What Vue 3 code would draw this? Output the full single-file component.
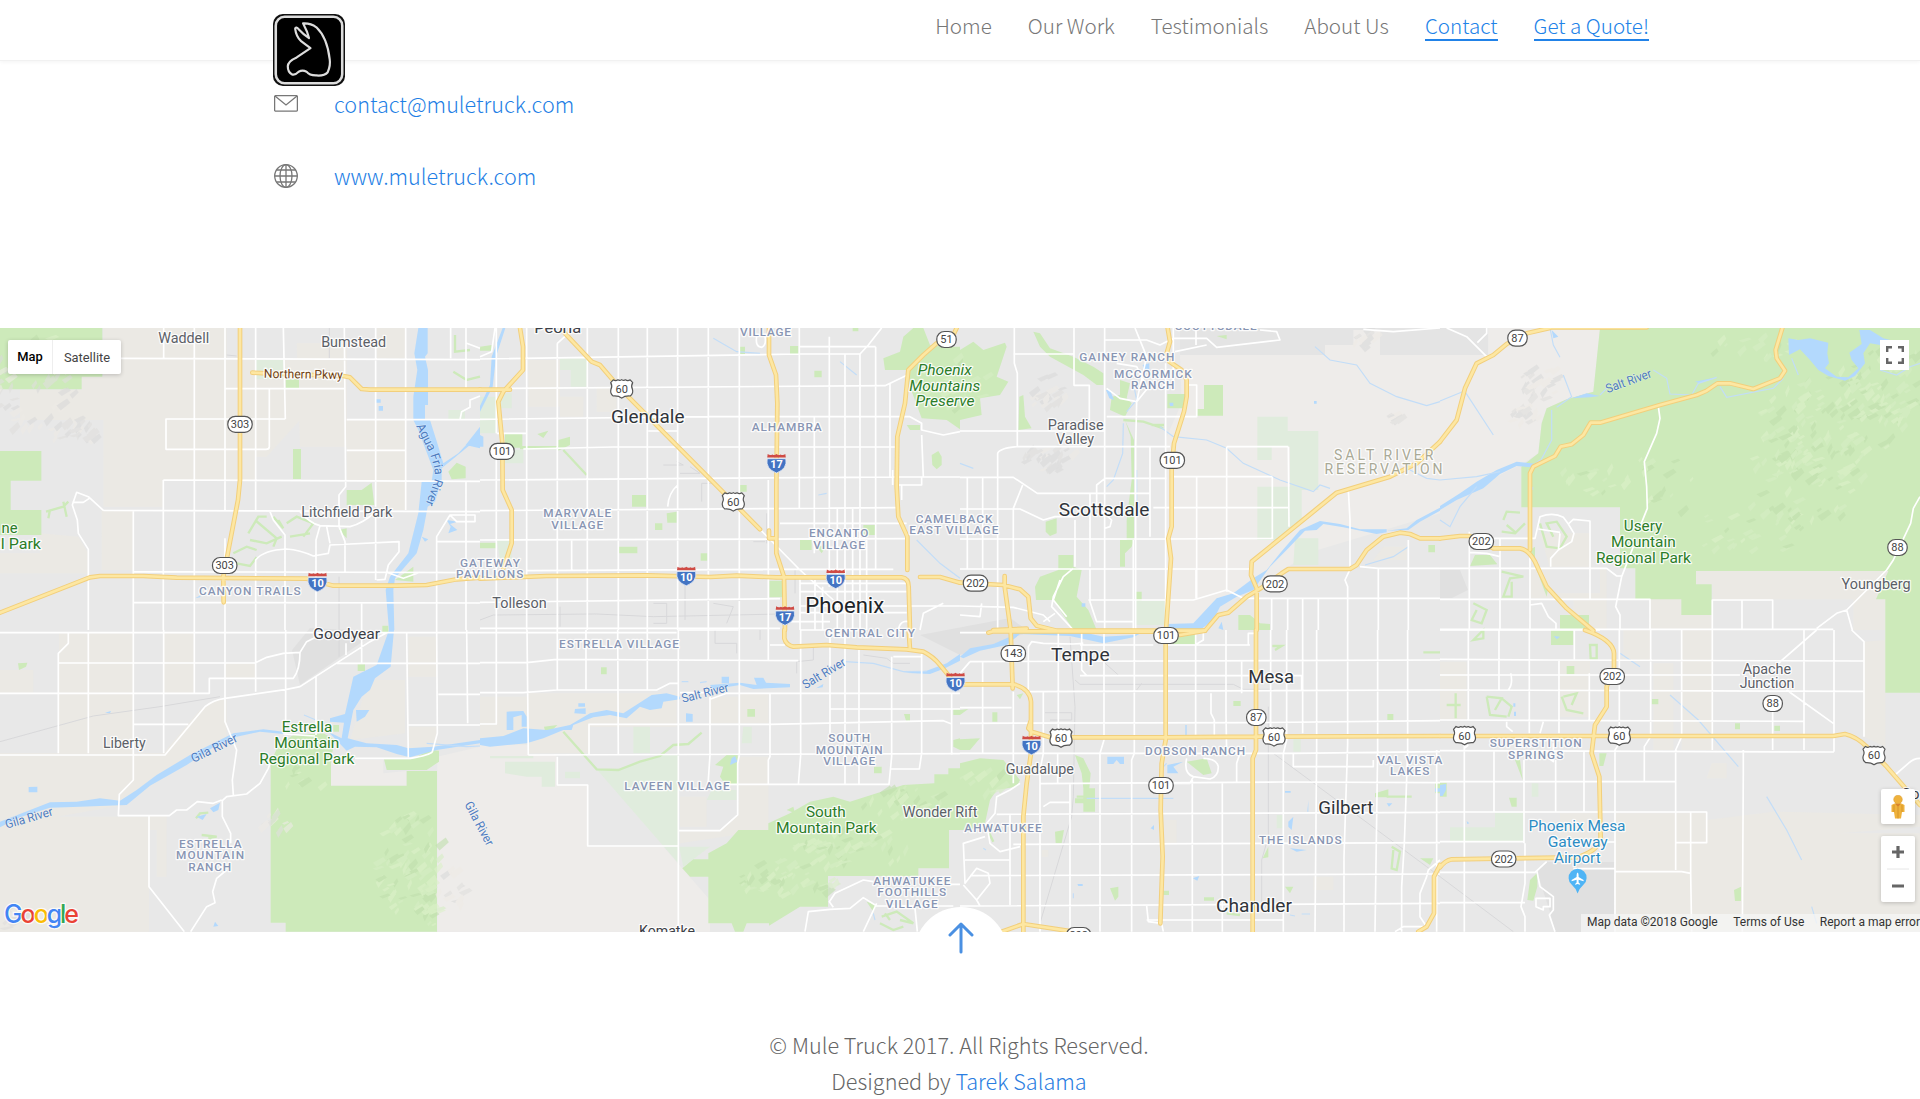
<script setup>
const nav = [
  { label: 'Home' },
  { label: 'Our Work' },
  { label: 'Testimonials' },
  { label: 'About Us' },
  { label: 'Contact', active: true },
  { label: 'Get a Quote!', active: true },
]

// Map geometry, split into eight sectors. Each sector is drawn at three units per pixel.
const sectors = [
  {
    x: 0, y: 320,
    farm: 'M310 24H680V120H900V300L800 410H765V480H490V560H310V300H60V210H245V170H310Z M890 70H1040V300H1220V570H1130V480H1040V380H900Z M305 570H400V750H305Z M1130 24H1215V115H1130Z M120 640L235 650 265 700V760H0V700H120Z',
    reserve: '',
    pale: 'M765 120H850V178H765Z M1345 270H1395V300H1345Z',
    park: 'M0 24H307V170H245V208H0Z M0 393H124V482H32V570H124V645H0Z M879 387H903V477H879Z M857 178H897V204H857Z M1345 455L1370 428 1397 440V475L1355 478Z M1040 510H1085L1115 488 1123 555H1040Z M1185 780L1240 740V785Z M1017 630L1040 625V655Z M1147 917H1165V930H1147Z',
    golf: 'M745 640L775 590H800 M765 600L830 655 820 680 M750 660L800 670 845 650 M820 590L850 625 835 600 M860 610L890 590 940 610 910 650 M870 650L930 640 M700 700L740 680 770 690 M710 730L750 738 770 712 M138 575L190 560 205 545 M145 595L150 570 M190 545L200 590 M1365 45V95L1410 90 M1360 155L1400 180 1440 170',
    water: 'M1255 24H1283V100L1275 110 1284 150V255H1275V300H1290L1312 370 1330 430 1375 400 1440 330V350L1325 445V480L1305 545 1283 560 1270 630 1250 700 1185 775 1180 810 1183 930H1167L1157 810 1170 770 1225 700 1255 580 1265 485H1295L1300 450 1255 330 1240 300V230L1252 150 1243 100Z M1397 375L1440 320V385Z M1128 238H1142V248H1128Z M1136 258H1149V272H1136Z M1340 600L1372 605 1350 612 1372 630 1345 640 1352 620Z M1265 650L1285 658 1275 665Z M585 835L603 825 600 832Z',
    brook: '',
    rail: 'M1017 770V930 M988 24V115 M680 105L710 108',
    streets: 'M491 24V115 M583 24V930 M675 24V570 M675 655V930 M767 24V570 M850 24L856 297 M808 208V380Q808 388 798 388H498V297H856 M1033 24L1037 500 1017 525V620 M1127 24V560 M1127 590V780 M1217 24V570 M1352 24V115 M1398 24V205 M362 115L1440 119 M675 206H1033 M1040 299H1440 M1040 391H1217 M490 480L1440 484 M310 571L1440 575 M490 480V930 M400 571V930 M400 755L1440 758 M400 847L1440 849 M265 930V688L235 640 232 600 217 555 230 517 265 530 310 571 M217 547H250L268 535 M810 575L820 600 855 645V930 M900 575Q930 610 960 617L1050 620Q1090 610 1127 575 M960 617L948 660V930 M767 930V720Q790 690 860 687 900 690 940 708L985 700 990 675 1197 665V695L1165 735 1155 778 1130 780 M980 620L990 670 M1017 620L1035 665V755 M1310 930V650L1350 585H1425V605H1370L1350 585 M1310 665H1440 M1398 484V930 M1160 757L1210 775 1260 757 M1085 850V930 M1380 299L1385 275 1410 262V240L1440 228 M1400 70L1440 85',
    highways: 'M720 24V480L714 540 670 770 671 847 M757 158L800 160 1030 168 1050 172 1085 207 1110 209H1440 M0 878L270 772 300 768H430L530 773 920 776 1000 797H1190L1280 795 1370 778 1440 773',
  },
  {
    x: 480, y: 320,
    farm: 'M145 120H240V260H145Z M240 230H310V290H240Z M350 200H410V275H350Z',
    reserve: '',
    pale: 'M240 115H325V150H240Z M60 220H95V265H60Z M90 390H130V430H75V400Z M0 230H50V340H0Z M272 150H320V200H272Z M50 660H95V720L60 715Z',
    park: 'M1210 115L1260 95 1270 50 1300 24H1330L1350 75 1390 80H1440V328L1400 300 1325 295 1290 200 1280 150 1215 150Z M75 342H127V383H75Z M456 525H498V560H456Z M560 580L590 575V608H562Z M525 610H547V630H525Z M417 680H472V700H417Z M662 700H682V722H662Z M778 495H800V515H778Z M868 782H910V832H868Z M1150 615H1187V645H1150Z M1355 405L1375 393 1385 410V435L1370 448 1357 435Z M960 660H995V690H960Z M172 342L205 332 190 354Z M235 360L270 350V375L235 392Z M930 78H955V102H930Z M780 80H795V102H780Z M1003 152H1025V172H1003Z M0 668H48V685H0Z M1118 24H1135V34H1118Z M1280 315H1320V330H1290Z M0 80L35 75V92H0Z M1010 680L1040 675 1025 700Z M120 378H240V388H120Z',
    golf: 'M250 390L320 465',
    water: 'M0 345L10 350V380H0Z M68 24H76L48 110 38 200 0 275V258L30 195 35 110Z',
    brook: 'M700 55L770 95 840 100 M1080 125L1130 165 M1310 660L1380 730 1440 775 M1015 525L1040 520',
    rail: 'M0 900L40 885 350 882 520 890 900 882 M520 850H560V910H520 M615 780V900 M700 850L760 860 740 910 M550 435H610L590 425 M600 460H660L630 440 M665 545V490H710 M860 580V670 M820 665H855 M945 750V820 M240 860V920',
    streets: 'M49 24V340 M49 400V930 M140 24V930 M232 70V930 M322 24V930 M415 24V930 M502 24V930 M593 24V930 M685 24V930 M778 24V930 M865 480V930 M0 117L958 102H1140L1165 75 1205 24 M90 205L1215 197 1282 165 M0 298L685 290H1290L1325 310V330L1390 345 1440 335 M130 387L400 381H1245 M0 480L1240 471H1440 M0 572L1255 563 M0 660L1280 656 M140 752L870 748H1240 M0 847L900 836 M0 925H900 M958 24V565 M958 80H1187 M1003 290V700 M1048 50V800 M1095 102V930 M1140 102V930 M1187 80V750 M1230 190V471 M1072 565V930 M1118 565V930 M1160 660V930 M900 610H1280 M840 628L960 750 1060 840 M960 790H1280 M960 815H1280 M960 858H1440 M960 878H1280 M930 905H1050 M960 770V930 M1005 780V930 M1028 800V930 M505 333H593 M593 495Q565 520 563 560 M275 660V750 M830 50Q825 80 845 82 860 75 855 50 M232 70L265 40 M0 110L35 95 45 24 M1245 495H1325V471 M1325 345L1330 471 M1265 495V540 M1238 450V495 M50 340H140 M1390 850L1330 880 1320 930 M1255 930Q1260 900 1285 905',
    highways: 'M120 24L129 80V150L70 215 55 245 67 370 68 510 95 570V670L70 745 M0 209H90 M250 35L335 125 360 135 420 205 840 628 M867 24V105L888 165 892 250 889 500V700L912 770 915 930 M867 632V655H885 M0 776L200 768 500 766 690 771 770 767 890 772H1265Q1286 775 1286 800L1290 930 M1430 24L1420 45 1370 70 1330 105 1285 150 1275 250 1252 350 1250 500 1255 590 1282 650V750 M1320 771H1380L1440 788',
  },
  {
    x: 960, y: 320,
    farm: 'M1270 680H1340V720H1240Z',
    reserve: 'M660 105H1440V580L1240 640 1040 700 960 760 870 800 780 840 720 915 620 915V350L665 250Z M1095 75H1180V30H1260V105H1095Z',
    pale: 'M892 290H983V380H935V420H892Z M983 333H1075V510H990V380H983Z M892 500H1025V600L950 660H892Z M1005 655H1075V735H1000Z M525 842H620V915H525Z',
    park: 'M0 90L40 65 70 90 135 68 140 80 110 170 145 185 120 225 60 235 65 285 0 300Z M220 35L240 40 270 85 340 110 400 140 430 160V195H410L370 165 270 110 240 80Z M622 222H675V265H622Z M732 195H789V287H712V267H732Z M480 180L510 190 500 235 515 250 495 290 450 270 455 230 480 225Z M495 300L522 360V660L515 680 495 700V740H480V660H500V600L515 480 512 350Z M175 330L178 230 190 225 195 290 215 325Z M295 705H340V740L365 750 350 830 385 870 410 930H340L280 840H228L225 800 240 770 295 750Z M257 605L290 595V640L270 648 257 635Z M835 885H870L900 910 930 912V930H835Z M1405 675H1425V697H1405Z M525 815H545V842H525Z M770 48L800 45V58Z',
    golf: 'M490 300L550 305 610 325 M575 315H612',
    water: 'M620 912L700 910 770 835 820 820 880 775 920 750 960 700 1020 630 1080 603 1140 612 1200 628H1280V637L1250 642 1150 622 1090 612 1070 630 1035 632 985 685 930 740 905 775 880 810 830 830 780 860 760 900 720 930H620Z M1280 632L1340 625 1370 600 1440 563V572L1380 605 1345 630Z M438 210L450 210 462 240 448 235Z M548 135L568 130V150H552Z M628 248H640V258H630Z M1062 243H1070V251H1062Z M775 925L785 905 790 930Z M365 850H376V860H365Z',
    brook: 'M600 320L640 350 740 360 800 385 850 430 960 480 1060 515 1080 495 1110 505 M1065 80L1110 120 1190 135 1230 190 1310 230 1400 257 1440 245 M490 310L488 400 460 480 440 500 M520 190L530 240 500 275 M0 430L40 445 M1350 450L1400 475 1440 480 M530 450V560 M1215 735L1300 710 1345 680',
    rail: '',
    streets: 'M163 24V130L172 160V378 M342 24V196H388V300 M434 24V650 M527 380V930 M617 130V930 M570 380V650 M22 470V745 M68 470V745 M113 930V400Q118 385 170 380H630 M160 565V745 M345 600V740 M390 520V740 M434 620V930 M710 470V835 M800 380V815 M937 470V655 M985 380L987 620 M160 102H340 M435 60H560L600 75 640 55H740L770 82 960 60 950 35 900 30 M645 95L740 75 M0 333H434 M440 290H710V195H685 M800 380H985 M640 470H937 M0 472H160L232 520H570 M0 567H180L250 600 285 590H345 M410 555V495L435 475H620 M410 520V560L455 600 450 620 435 625 M580 563H985 M0 657H620L940 655 M0 747H870 M385 840H700L800 810 850 835H1440 M1165 510L1170 600V745 M1170 748L1155 780 1163 800V930 M1200 740L1255 745H1440 M1255 745V930 M1345 660V930 M1075 838V930 M1028 838V930 M983 838V930 M935 838V930 M188 495L160 565 M340 745L310 770 280 830 275 860 340 930 M0 858L160 862 250 885 270 905 M390 745V845L410 905H520 M0 885L60 890 65 850 M525 24L560 110 530 245 527 380 M575 190L530 245 M440 205L480 235 530 245 M470 130L530 140 560 200 M520 660V930 M1210 28L1300 35 1440 24 M708 750V835 M640 24V200 M708 24V75 M300 780L280 840 320 890 M250 905L285 880',
    highways: 'M623 24L630 65 620 100 628 125 665 150 680 180V230L672 275 642 370 635 450V620L625 655 633 715 618 930 M1440 365L1370 430 1290 470 1130 518 1060 575 875 725 873 765 890 805V930 M0 788L130 795 180 808 205 830 212 895 230 917 290 932H735L775 885 805 878 860 830 905 803 965 760 985 747H1170L1190 735 1220 690 1270 650 1320 638 1350 642 1380 655H1440 M134 768V800L152 930 M100 930L200 926',
  },
  {
    x: 1440, y: 320,
    farm: 'M768 753H1345L1308 838H818V793H768Z M300 640H450V740H330V820H480V745H500V930H400V835H270V745H330Z M630 838H724V885H815V930H630Z M1240 838H1336V930H1240Z',
    reserve: 'M145 24H480L460 215 380 238 320 265 305 310 295 400 250 430 150 480 0 570V105H145Z',
    pale: '',
    park: 'M480 24H1440V930H1336V838H1308L1345 753H768V793H815V885H724V838H586V745H540V562H244V440L295 400 305 310 320 265 380 238 460 215Z M90 738L105 705H150L172 733Z M360 885H447V930H360Z M268 690L285 680V720L325 800 320 830Z',
    golf: 'M190 600L200 575 240 578 M185 635L225 640 255 610 M200 615L230 640 M300 610L320 680 360 685 380 650 350 605 320 610 340 650 M185 755L250 770 210 775 190 830H215V785 M100 850L140 870 125 910 95 900 110 870',
    water: 'M1045 55L1075 60 1110 55 1165 68 1162 100 1167 130 1155 145 1190 170 1225 172 1255 145 1235 120 1228 98 1265 72 1258 30 1290 30 1330 55 1390 70V80L1320 75 1290 70 1270 100 1275 130 1245 168 1215 182 1165 168 1135 150 1110 120 1080 88 1047 105Z M0 558L60 520 110 485 170 450 230 425 290 432 275 442 230 438 180 462 130 505 50 540 0 570Z M335 30L355 50 340 55Z M395 235L440 220 480 228 450 232Z M765 185L830 172 780 190Z',
    brook: 'M330 24L340 75 360 112 M370 165L395 230 350 262 M335 270V360L300 425 M75 215L160 345 M0 243L75 212 M480 225L500 205 M640 150L680 175 690 222 755 225 775 190 830 172 M840 200L860 232 1000 205 1030 175 M1055 115L1075 165 M0 480L110 470 180 455 M1320 150L1370 165 1410 140 1440 130 M0 600L30 620 60 560 110 500 M275 440L300 420 M278 500V510',
    rail: '',
    streets: 'M20 24L80 50 140 110 M112 68L140 40V24 M655 260L660 295 650 340 613 425 620 500 622 565 600 620 M580 680L545 770 527 860 540 885V930 M1440 530L1420 565 1412 610 1360 720 1340 750 1220 870 1190 880 1130 925 M1220 870L1237 930 M0 745H500L530 768H545 M0 838H630V930 M160 655H285L300 590Q340 575 370 592L385 612 402 640 395 665 355 690 332 715V740 M385 612L400 598 450 603V838 M295 627L360 637 M360 640L355 690 M88 635V930 M180 655V930 M270 700V930 M817 930V840H998V930 M906 840V930 M270 855L305 850 325 890 348 910V930 M90 697L140 700 180 710 M0 928H1180',
    highways: 'M0 365L50 300 75 205 110 130 160 105 200 72 260 40 330 24 M330 22H620 M1027 24L1007 90 1010 115 1035 152 1020 175 940 207 870 190H832L800 212 770 225 660 255 480 308H452L430 345 395 373 362 380 345 408 280 440 270 460V690 M0 655L60 648H90L160 685H240Q265 688 285 725L320 800 380 865 460 932',
  },
  {
    x: 0, y: 630,
    farm: 'M0 370H490L600 240 650 210H680V320L560 395 370 525 0 590Z M0 560H447V905H0Z M177 8H400V370H177Z M490 8H583V190H490Z M675 100H767V145H675Z M1225 20H1310V140H1225Z M1100 150H1215V310L1050 330 1090 200Z M1225 290H1310V360H1225Z M447 557H500V740H470V600H447Z M0 120H100V190H0Z',
    reserve: 'M1312 423H1440V905H1312Z M1312 380L1440 350V423H1312Z M1000 390H1150V430L1220 423V467H993V400Z',
    pale: '',
    park: 'M812 400L835 345 880 315 970 310 1005 330 993 385V467H1220V423H1311V905H857V878H812Z M1152 388H1235L1290 360 1317 362V395L1280 420H1160Z M54 100L82 98 78 110 57 120Z M1073 103H1095V123H1073Z M1147 0H1165V8H1147Z M1000 285H1017V305H1000Z',
    golf: 'M588 565L600 550 625 548 M605 615L650 620 625 625',
    water: 'M0 575L150 517 230 515 300 505 360 512 410 480 470 435 570 375 640 340 700 310 790 298 850 305V312L780 305 710 320 640 352 560 405 450 467 380 525 240 530 150 533 60 562 0 592Z M1167 0H1182L1172 110 1125 145 1110 180 1085 200 1060 240 1043 325 1100 340 1190 345 1225 355 1300 350 1440 330V340L1310 360 1230 382 1190 372 1130 352 1065 350 1040 362 985 305 1025 325 1032 278 990 275V265L1035 252 1060 140 1130 105Z M1068 240H1108L1095 260 1070 275Z M86 471L112 470V487H86Z M630 535L660 518 655 540 640 547Z M590 560L620 552 608 570Z M640 890L645 875 655 888Z M315 248L333 243 330 250Z',
    brook: 'M912 255L960 275 M1280 340L1400 350 1440 348',
    rail: 'M0 335L280 258 480 230 660 200 M1017 0V80',
    streets: 'M0 8H1440 M177 99H765L800 82 850 70 900 67Q900 120 880 145H628V190H0 M205 8V40L175 70V370 M265 8V370 M400 0V450L358 493 355 557H508L530 540H560L592 515 640 520 665 510 M491 0V370 M583 0V190 M675 0V275L710 360 697 450 700 495 M767 0V185 M857 0V310 M948 140V315 M1220 8L1225 382 M1310 0L1312 310 1297 365Q1290 375 1230 385H1065 M1400 0L1403 280 M1225 285H1440 M1010 100H1440 M1315 193H1440 M675 205L860 178 900 170 1110 35 1160 8 M0 375H495L615 230Q640 210 675 205 M400 283H565 M900 67L920 35 950 20 M1085 30V100 M1038 40V75 M812 395L805 415 780 460 740 492 680 500 667 512V560L692 610V640 M680 720L650 745 638 785 645 818 620 830 572 905 M447 557V770L553 905 M850 312L945 318',
    highways: '',
  },
  {
    x: 480, y: 630,
    farm: 'M0 200H145V370H0Z M145 190H590V290H330V370H145Z M780 190H865V280H780Z M780 380H865V600L600 640V602H720L775 555Z M690 200H775V280H690Z M600 500H680V590H600Z',
    reserve: 'M0 340L145 345V375H230V465H325V650H550L690 810V905H0Z',
    pale: 'M350 418L420 420 540 375H595V700Z M75 395H225V470H185V440H140L75 430Z M460 290H510V370H460Z M255 425H300V445H255Z M790 290H815V340H785Z M597 650H690L610 710Z M30 378H160V385H30Z M695 480H770V510H680Z',
    park: 'M607 715L640 688H685V670L740 640 775 600H865V580L930 550 990 515 1060 500 1110 515 1190 490 1270 465 1363 460V433H1405V415H1440V600H1407V715H1315V738H1044V830H960L867 887V880H800L790 905H765L755 880H685V740H630Z M705 405L740 375H773V462H735L720 440 730 410Z M363 112H380V133H363Z M802 237H825V260H802Z M1182 410H1205V430H1182Z M1272 252H1290V272H1278Z M1420 237H1440V255H1420Z M192 290L232 285 215 302H195Z M1160 815L1190 825 1180 845Z M1420 330L1440 325V360L1420 350Z M920 540L940 530 945 550Z',
    golf: 'M250 305L350 418 415 420 480 395 540 378 580 345 625 342 665 308 M1205 860L1250 845 1300 880 1260 870 M1200 880L1240 900 1270 890 M1215 850L1230 870',
    water: 'M0 325L70 318 130 295 200 300 270 285 330 250 380 240 430 250 500 205 515 195 560 190 600 200V208L550 215 545 235 510 240 480 230 440 265 390 255 340 262 280 285 275 300 250 300 190 325 140 340 30 350 0 345Z M80 245L130 243 140 260V290H125V255L100 262V300H80Z M295 220H315V230H295Z M285 237L317 235V252L283 250Z M725 140H747V160H725Z M690 165L780 158 830 165 822 143H850L858 158 930 162V172L820 177 780 165 700 178Z M618 250L638 252V275H618Z M1008 175L1030 162 1028 172Z M750 405L755 385 765 378 772 395Z M1340 122L1400 100 1440 72V92L1395 115 1350 132 1270 128Z',
    brook: 'M1095 95L1180 100 1270 125 1340 124 M605 155H625 M660 158L680 155 M1180 850L1185 870',
    rail: 'M705 0V40H770V70 M950 130V95L1000 90V50 M1150 75L1220 85 1240 100H1290 M840 0V30',
    streets: 'M49 0V282H0 M141 0L145 375 M232 0V180 M318 0V180 M413 0L415 375 M502 0V180 M595 0V905 M685 0V90 M778 0V375L773 400V555L720 602H595 M690 200V375L684 465 M870 190V380L865 390V465 M962 0V375L955 465 M1050 0V310 M1095 0V465 M1137 60V465 M1235 80V380L1227 463H745 M1325 70V370L1318 417H1230 M1415 190V375 M0 8H590 M0 98H140L230 88 955 92 M0 188H130L230 180H530L570 160H595 M690 208L740 190H1440 M1050 237H1440 M325 283H870L1390 272 1415 282 M327 283V375 M145 375L1440 371 M232 380V465H323V648H593 M870 45H915 M865 0V90 M600 188H690 M975 905L985 845 1050 838 1110 835 1150 803 1190 828H1420 M1060 832L1048 815 1065 790 1150 750 1180 755 M1190 820L1150 905 M1305 835L1312 905 M1410 763H1440 M1240 80H1325 M595 0H775 M960 0H1080',
    highways: 'M913 0V25Q918 45 940 50L1040 45 1130 52 1280 58 1330 65Q1360 80 1380 105L1425 160 1440 163 M1286 0L1290 58',
  },
  {
    x: 960, y: 630,
    farm: 'M610 570H650V640H610Z M1060 740H1120V780H1060Z M245 660H265V680H245Z',
    reserve: '',
    pale: 'M1000 325H1022V365H1000Z M950 555H968V595H950Z',
    park: 'M0 400L60 385 130 390 180 450 170 470 110 480 90 510 75 580 30 600H0Z M345 375L370 385 392 430 388 475H405V545H370V520H345V505H370V475L365 430Z M680 395L740 385 755 430 730 435Z M820 213H842V228H820Z M97 247H112V275H97Z M0 328L60 325 30 360H0Z M0 240L25 237 0 255Z M285 605L312 600 305 640H287Z M1282 252H1300V270H1282Z M1245 490L1285 478V502H1245Z M908 685L925 650V682Z M450 775L475 770V800L465 812Z M610 782H627V795H610Z M732 802H762V812H732Z M975 770H1000L990 790Z M1380 685H1420L1410 705Z M650 20L705 12V43H620Z M170 195L190 190 180 208Z M1425 460H1440V490H1425Z',
    golf: 'M1295 650L1320 665 1310 720 1295 715 1300 660 M95 590L88 610 100 635 M937 48H965L945 60 M1390 67H1440 M1280 500H1355 M800 850L840 855 M350 500H405',
    water: 'M0 80L30 55 100 42 150 20 175 0H340L430 20 520 15 560 0 520 22 430 40 330 18 180 12 140 45 60 62 10 85Z M442 380H492V402H480L470 390 460 402H442Z M622 405L670 395 640 410 655 430 622 430Z M985 575L1000 560 995 600 985 590Z M990 655L1040 660 1010 665Z M698 745L718 738 712 752Z M1280 520H1297L1287 530Z M572 595L582 585V600Z M975 483H992V488H975Z M352 762H368V768H355Z M1425 475H1440V485H1425Z M1045 510V545H1042Z M676 285H680V315H676Z',
    brook: 'M380 505H640 M990 855L1005 858 M1025 852H1050 M340 790V805 M70 655L78 660 M620 400L600 420',
    rail: 'M240 880L335 560 340 500 345 230 330 20 M345 150L360 163H820L850 178H940 M925 230V620L905 690V820 M940 370L1400 710 1440 740 M255 248H335V270H270 M430 95L475 135 M530 180L545 160',
    streets: 'M68 95V370 M160 185V460 M250 185V370L240 420V905 M295 0V320 M293 370V460 M330 460V905 M432 0V330L420 370V905 M523 0V370L515 390V905 M697 450V905 M707 0V320 M787 460V905 M798 0V250L800 370 M845 95V190 M932 0V310 M980 0V330L970 370V905 M1028 0V310 M1070 0V350L1065 905 M1163 0V340L1152 680V905 M1253 0V360L1245 905 M1343 0V365L1333 640 1325 770V905 M1430 360V905 M30 95L1440 90 M0 130L30 95 M360 137H880 M890 137H1025V180 M200 185L1440 180 M0 233H155 M0 280L890 278 1440 272 M0 370H1000L1440 365 M240 461L965 456 1440 458 M110 553L1440 547 M160 643L1440 638 M30 737L1440 732 M50 828L1440 820 M560 870H970 M560 828L565 875 605 880 610 905 M365 0V120L380 137 M680 385Q670 430 700 440L750 447Q775 440 775 410 770 385 730 385 M700 440L690 460H640 M180 460L150 480 110 500 105 550 80 580 90 640 120 665 180 650 M150 555V825 M75 620L10 640 15 760 50 715 85 730 90 760 50 810 10 765 M15 690H150 M0 828H60L50 810 M250 530L270 517H328 M1000 370V410H1240V390 M1440 690L1405 720 1400 740 1380 790V860L1400 890 M1305 905L1330 890H1390 M360 45H580 M205 180V50L215 35 250 40 340 42 370 40 M865 45V10H890 M705 45L730 30V0 M753 190V250L763 270V320 M840 370L830 400V460 M610 45H870 M0 8H90',
    highways: 'M85 8L100 4 290 4 580 5 M660 15L735 2 M152 0L158 175 M0 163H160Q210 175 213 215V270L205 295 215 305 270 322H610L890 320 1440 318 M213 270V370L200 460 190 560V905 M617 0V330L605 400 602 540 608 680 601 880 M888 0V360L878 385V905 M125 905L190 882 340 905 M1440 705L1422 740V850L1400 890 1375 905',
  },
  {
    x: 1440, y: 630,
    farm: 'M525 550H800V905H525Z M800 570L1000 545 1440 555V590L1200 610H1440V905H755V640H800Z M725 0H815V360H725Z M640 100H700V360H640Z M1272 35L1336 30V350L1272 320Z M360 90H450V260H360Z M0 95H80V270H0Z M815 400H860V445H800Z M360 550H480V640H360Z M550 0H630V90H550Z',
    reserve: '',
    pale: 'M165 548H250V635H165Z M30 592H165V635H30Z M275 460H295V500H275Z',
    park: 'M1336 0H1440V188H1336Z M333 0H400V45H333Z M380 108H403V133H380Z M635 207H655V223H635Z M885 280H900V298H885Z M1003 287H1020V303H1003Z M478 370H500L490 408H478Z M207 503H230V530H215Z M882 780L903 770V813H885Z M262 810L270 750 292 728V770L280 812Z M225 390H240L248 450Z M0 458H20V500H0Z',
    golf: 'M20 225H62 M47 190V265 M140 200L150 255 200 260 M140 200L185 205 165 240 M185 205L215 230 205 260 M365 200L380 240 430 250 M370 200L410 190 395 225 M100 30L130 0V25Z M450 45H470V85H452Z',
    water: 'M0 465L18 462V480L8 498H0Z M342 18L360 20 350 28Z M220 220H226V230H220Z M222 245H228V258H222Z M80 573L88 580 82 582Z',
    brook: 'M540 70L600 110 M690 195L775 270 895 410 M980 500L1040 600 1085 690 M1115 830L1130 880',
    rail: 'M0 740L220 905',
    streets: 'M85 0V270 M177 0V180 M268 0V310 M403 0V88 M538 0V340L525 360V905 M632 0V320L613 350V455 M725 0V320L707 360V720 M817 0V360 M910 360V420L907 905 M998 200V360 M1092 0V360 M1182 0V365 M73 345V905 M162 365V545 M252 390V640 M347 390V545 M432 365V545 M357 90V310 M448 130V270 M0 88L320 90 1272 93 M0 135H900 M0 180L1272 184 M0 270L1090 274 M0 362L1182 366 M0 455H705 M0 546H800V638H707 M752 547V730L755 905 M0 635H250 M525 725H725L752 730 M0 727H285L320 695 M400 716H525 M0 818H255 M1130 0L1015 100 M1040 180L1180 280 M1235 0L1272 35V320 M1365 435L1405 400Q1420 385 1440 385 M290 720L300 770 340 800V840L328 855 345 905 M255 640V760L243 830 255 860V905 M288 805H330V830H310V840L288 830Z M85 345L73 355 M212 130Q220 160 205 180 M200 275V290L218 305 M310 275L300 310 M340 340V395L320 380 M480 636H525 M0 0H480',
    highways: 'M435 0Q520 30 522 70V120L500 170V230L465 285 455 370 478 440 482 630Q470 665 410 682L35 688Q15 692 0 712 M0 318H1180L1215 312Q1250 320 1280 350L1340 410 1440 525',
  },
]
const layers = [
  'farm', 'reserve', 'pale', 'park', 'golf', 'relief',
  'water', 'brook', 'rail', 'streets', 'casing', 'highways',
]
const at = (s) => `translate(${s.x} ${s.y}) scale(0.33333)`

// Hill shading: facets scattered inside elliptical ranges.
const ranges = [
  [30, 390, 45, 45, 50, 'stone'], [70, 432, 26, 14, 28, 'stone'], [55, 350, 40, 14, 12, 'green'],
  [1825, 430, 75, 55, 110, 'green'], [1880, 385, 50, 40, 60, 'green'], [1800, 480, 60, 50, 60, 'green'],
  [1745, 530, 60, 25, 30, 'green'], [1670, 480, 40, 35, 14, 'green'], [1590, 480, 35, 14, 14, 'green'],
  [1760, 350, 55, 14, 14, 'green'],
  [1537, 385, 20, 18, 26, 'stone'], [1520, 417, 16, 12, 20, 'stone'],
  [1050, 460, 30, 12, 26, 'stone'], [1045, 395, 18, 20, 22, 'stone'], [1360, 340, 13, 10, 12, 'stone'], [1392, 418, 6, 6, 8, 'stone'],
  [405, 865, 34, 50, 70, 'green'], [425, 905, 12, 24, 26, 'green'], [300, 785, 18, 18, 8, 'green'],
  [785, 880, 50, 20, 44, 'green'], [850, 850, 60, 18, 44, 'green'], [900, 805, 40, 18, 26, 'green'], [980, 785, 24, 15, 12, 'green'],
  [950, 385, 35, 30, 22, 'green'], [275, 825, 20, 12, 10, 'stone'], [450, 890, 16, 20, 12, 'stone'], [10, 920, 16, 12, 8, 'stone'],
]
let seed = 11
const rand = () => ((seed = (seed * 16807) % 2147483647) / 2147483647)
const facets = ranges.flatMap(([cx, cy, rx, ry, n, tone]) =>
  Array.from({ length: n }, () => {
    const a = rand() * 6.283, r = Math.sqrt(rand())
    const x = cx + Math.cos(a) * r * rx, y = cy + Math.sin(a) * r * ry
    const w = 3 + rand() * 8, h = 2 + rand() * 6
    const tones = tone === 'green' ? ['#c0dfad', '#dcf1c9', '#d6eec4'] : ['#dadada', '#eeebe6', '#e0dfdd']
    return {
      d: `M${x.toFixed(1)} ${y.toFixed(1)}l${w.toFixed(1)} ${(-h).toFixed(1)} ${(w * 0.3).toFixed(1)} ${(h * 0.6).toFixed(1)} ${(-w * 0.9).toFixed(1)} ${(h * 1.1).toFixed(1)}z`,
      fill: tones[Math.floor(rand() * 3)],
    }
  }),
)

// [text, centre x, baseline y, width, style, rotation]
const labels = [
  ['Waddell', 183.7, 343.3, 51, 'town'], ['Bumstead', 353.7, 347, 65, 'town'],
  ['Northern Pkwy', 303.3, 378.5, 79, 'road', 1], ['Litchfield Park', 346.7, 516.7, 91, 'town'],
  ['ne', 9.5, 533.3, 16, 'green'], ['al Park', 16.5, 549, 49, 'green'],
  ['CANYON TRAILS', 249.8, 594.5, 101.7, 'hood'],
  ['GATEWAY', 490, 566.8, 60, 'hood'], ['PAVILIONS', 489.7, 578.4, 67.3, 'hood'],
  ['Goodyear', 346.7, 638.7, 66.7, 'town dark'], ['Peoria', 557.7, 332.7, 47, 'town dark'],
  ['VILLAGE', 765.5, 335.7, 51, 'hood'], ['Glendale', 647.7, 422.7, 73.5, 'city'],
  ['ALHAMBRA', 786.7, 431.2, 70, 'hood'],
  ['MARYVALE', 577.2, 517.4, 67.7, 'hood'], ['VILLAGE', 577.2, 529, 52, 'hood'],
  ['ENCANTO', 838.7, 537.2, 59.3, 'hood'], ['VILLAGE', 839, 548.8, 51.7, 'hood'],
  ['CAMELBACK', 954, 522.8, 76.7, 'hood'], ['EAST VILLAGE', 953.8, 534.3, 89, 'hood'],
  ['Tolleson', 519.5, 607.7, 54.3, 'town'], ['Phoenix', 844.7, 613.3, 79, 'metro'],
  ['CENTRAL CITY', 870, 636.8, 90, 'hood'],
  ['Phoenix', 944.7, 375, 54, 'green slant'], ['Mountains', 944.7, 390.5, 71, 'green slant'], ['Preserve', 945, 406, 59, 'green slant'],
  ['SCOTTSDALE', 1215.8, 330, 81.7, 'hood'], ['GAINEY RANCH', 1126.8, 361.2, 95, 'hood'],
  ['MCCORMICK', 1152.8, 377.8, 77.7, 'hood'], ['RANCH', 1152.7, 389.4, 43.3, 'hood'],
  ['Paradise', 1075.7, 430, 56, 'town'], ['Valley', 1075, 444.4, 38, 'town'],
  ['Scottsdale', 1104, 516.3, 90.7, 'city'],
  ['SALT RIVER', 1383.7, 460, 99.3, 'tribe'], ['RESERVATION', 1383.5, 474, 118, 'tribe'],
  ['Usery', 1643, 531, 38.3, 'green'], ['Mountain', 1643.3, 547, 64.7, 'green'], ['Regional Park', 1643.5, 562.6, 95, 'green'],
  ['Youngberg', 1876, 589, 69, 'town'], ['Liberty', 124.3, 748.3, 42.7, 'town'],
  ['Estrella', 307, 732, 50.7, 'green'], ['Mountain', 306.8, 748, 65, 'green'], ['Regional Park', 306.8, 763.6, 95, 'green'],
  ['ESTRELLA', 210.3, 847.8, 62.7, 'hood'], ['MOUNTAIN', 210, 859.4, 68, 'hood'], ['RANCH', 209.7, 871, 42.7, 'hood'],
  ['ESTRELLA VILLAGE', 619, 648, 120, 'hood'],
  ['SOUTH', 849.2, 742, 41.7, 'hood'], ['MOUNTAIN', 849.2, 753.6, 67, 'hood'], ['VILLAGE', 849.2, 765.2, 51.7, 'hood'],
  ['LAVEEN VILLAGE', 677, 790.2, 105.3, 'hood'],
  ['South', 825.8, 817, 39.7, 'green'], ['Mountain Park', 826.3, 832.8, 100.7, 'green'],
  ['Wonder Rift', 940, 817.3, 74.7, 'town'],
  ['AHWATUKEE', 911.8, 884.6, 77, 'hood'], ['FOOTHILLS', 911.7, 896.2, 68.7, 'hood'], ['VILLAGE', 911.7, 907.6, 52, 'hood'],
  ['Komatke', 667, 936.3, 56, 'town dark'],
  ['Tempe', 1080.3, 661, 58.7, 'city'], ['Mesa', 1271.2, 682.6, 45.7, 'city'],
  ['DOBSON RANCH', 1195, 755.2, 100, 'hood'], ['Guadalupe', 1039.8, 774.4, 68.3, 'town'],
  ['AHWATUKEE', 1003, 832.2, 77.3, 'hood'], ['Gilbert', 1345.8, 813.7, 55, 'city'],
  ['THE ISLANDS', 1300.3, 844.2, 82.7, 'hood'], ['Chandler', 1254, 911.7, 76, 'city'],
  ['VAL VISTA', 1409.8, 763.6, 65, 'hood'], ['LAKES', 1409.7, 775.2, 39.3, 'hood'],
  ['Apache', 1767, 674, 48.3, 'town'], ['Junction', 1767, 688.2, 54.7, 'town'],
  ['SUPERSTITION', 1535.7, 747.2, 92, 'hood'], ['SPRINGS', 1535.7, 758.8, 55.3, 'hood'],
  ['Phoenix Mesa', 1577, 831, 97, 'airport'], ['Gateway', 1577.7, 847, 60, 'airport'], ['Airport', 1577.3, 862.6, 46.7, 'airport'],
  ['Go', 1910.5, 799, 18, 'town dark'],
  ['Gila River', 216, 752, 50, 'river', -26], ['Gila River', 30, 822, 49, 'river', -16], ['Gila River', 475.5, 825.5, 48, 'river', 62],
  ['Salt River', 706, 697, 48, 'river', -14], ['Salt River', 826, 677, 48, 'river', -31], ['Salt River', 1630, 385, 48, 'river', -20],
]
const spaced = (kind) => kind === 'hood' || kind === 'tribe'
const stateShields = [
  ['303', 240, 424.3], ['303', 224.7, 565.5], ['101', 502, 451.3], ['51', 946.5, 339.5], ['101', 1172.3, 460.3],
  ['202', 975.5, 583.2], ['202', 1275, 583.8], ['87', 1517.5, 338.2], ['202', 1481.3, 541.5], ['88', 1897.5, 547.5],
  ['101', 1166, 635.5], ['143', 1013.3, 653.5], ['87', 1256.3, 717.5], ['101', 1161, 785.5], ['202', 1612.2, 676.5],
  ['88', 1772.7, 703.5], ['202', 1503.7, 859], ['202', 1078.7, 935.5],
]
const usShields = [
  [621.7, 388.6], [733.3, 501.6], [1061, 737.8], [1274, 736.6], [1464.5, 735.3], [1619.3, 735.8], [1874, 755.2],
]
const interstates = [
  ['10', 317.5, 582], ['17', 776.5, 463.2], ['10', 686.3, 576], ['10', 835.7, 578.8], ['17', 785, 615.5], ['10', 955.5, 682], ['10', 1031.5, 745],
]
</script>

<template>
  <div class="page">
    <header class="topbar">
      <div class="wrap">
        <svg class="logo" viewBox="0 0 73 73">
          <rect width="73" height="73" rx="10" fill="#111" />
          <rect x="2.8" y="2.8" width="67.4" height="67.4" rx="9" fill="#000" stroke="#ddd" stroke-width="2.6" />
          <path d="M38 34.5L24 44Q15 48 15 53 15 59 19 61 22 62.5 26 58.500 30 56.500 34 58.500 37 62.500 44 62.300 52 63 55.500 59 58.500 52 57.500 46 55 24 44 13.500 38 9 30.500 9.500L34.500 18 36.500 24.500Q31 21 26.500 16 23 12 22.500 15 23.500 23 28.500 27.500 33 31 38 34.500Z" fill="#000" stroke="#ddd" stroke-width="2.2" stroke-linejoin="round" />
        </svg>
        <nav class="nav">
          <a v-for="n in nav" :key="n.label" :class="{ active: n.active }">{{ n.label }}</a>
        </nav>
      </div>
    </header>

    <main class="contact">
      <div class="row">
        <svg class="icon mail" viewBox="0 0 24 17"><rect x=".6" y=".6" width="22.800" height="15.600" rx="1.200" /><path d="M1 1L12 10 23 1" /></svg>
        <a>contact@muletruck.com</a>
      </div>
      <div class="row">
        <svg class="icon globe" viewBox="0 0 24 24"><circle cx="12" cy="12" r="11.300" /><ellipse cx="12" cy="12" rx="6" ry="11.300" /><path d="M12 .7V23.300M.7 12H23.300M2.500 6H21.500M2.500 18H21.500" /></svg>
        <a>www.muletruck.com</a>
      </div>
    </main>

    <section class="map">
      <svg class="canvas" viewBox="0 328 1920 604">
        <defs>
          <path id="agua" d="M416 426L429 452Q438 474 433 484L425 506" />
        </defs>
        <rect x="0" y="328" width="1920" height="604" fill="#e8e8e8" />
        <path d="M1180 328H1488V355H1180Z" fill="#e4e4e4" />
        <path d="M292 650L310 628 350 630 365 640 300 685ZM1537 872L1547 862H1614V932H1555L1550 912ZM1440 570H1460L1468 590 1452 598H1440ZM920 635L1010 618 1030 632 960 655Z" fill="#e0e0e0" />
        <g v-for="layer in layers" :key="layer" :class="layer">
          <template v-if="layer === 'relief'">
            <path v-for="(f, i) in facets" :key="i" :d="f.d" :fill="f.fill" />
          </template>
          <template v-else>
            <path v-for="(s, i) in sectors" :key="i" :transform="at(s)" :d="s[layer === 'casing' ? 'highways' : layer]" />
          </template>
        </g>

        <text v-for="(l, i) in labels" :key="i" :x="l[1]" :y="l[2]" :textLength="l[3]" :lengthAdjust="spaced(l[4]) ? 'spacing' : 'spacingAndGlyphs'" :class="['label', l[4]]" :transform="l[5] ? `rotate(${l[5]} ${l[1]} ${l[2]})` : null">{{ l[0] }}</text>
        <text class="label river along"><textPath href="#agua">Agua Fria River</textPath></text>

        <g v-for="([n, x, y], i) in stateShields" :key="'s' + i" :transform="`translate(${x} ${y})`">
          <rect :x="n.length > 2 ? -12.2 : -9.7" y="-8" :width="n.length > 2 ? 24.4 : 19.4" height="16" rx="7.600" fill="#fff" stroke="#555" stroke-width="1.200" />
          <text class="num" y="3.900">{{ n }}</text>
        </g>
        <g v-for="([x, y], i) in usShields" :key="'u' + i" :transform="`translate(${x} ${y})`">
          <path d="M-8.500-8.800Q-6-7-3.800-8.800-1.800-7.600 0-9 1.800-7.600 3.800-8.800 6-7 8.500-8.800L11-6Q9-2.500 10.700.5 12 5 8.500 7.400 3 7 0 9.500-3 7-8.500 7.400-12 5-10.700.5-9-2.500-11-6Z" fill="#fff" stroke="#555" stroke-width="1.200" stroke-linejoin="round" />
          <text class="num" y="4.200">60</text>
        </g>
        <g v-for="([n, x, y], i) in interstates" :key="'i' + i" :transform="`translate(${x} ${y})`">
          <path d="M-9.300-4.500H9.300Q11.300 5.500 0 9.800-11.300 5.500-9.300-4.500Z" fill="#4374c3" stroke="#e8eef8" stroke-width=".8" />
          <path d="M-8.800-9.200Q-6.500-7.300-4-8.800-2-7.500 0-9.300 2-7.500 4-8.800 6.500-7.300 8.800-9.200L9.300-5.800H-9.300Z" fill="#cf4b45" />
          <text class="num inter" y="5">{{ n }}</text>
        </g>

        <g transform="translate(1577.600 879)">
          <path d="M0 14.500Q-1.500 9.500-6 5.500A9 9 0 1 1 6 5.500Q1.500 9.500 0 14.500Z" fill="#4fb4f5" />
          <path d="M0-6.500Q1-6 1-3.500V-2L6 1V2.200L1 .8V3.500L2.500 5V5.800L0 5-2.500 5.800V5L-1 3.500V.8L-6 2.200V1L-1-2V-3.500Q-1-6 0-6.500Z" fill="#fff" />
        </g>
        <text class="google" x="4" y="922.500" textLength="75"><tspan fill="#4285f4">G</tspan><tspan fill="#ea4335">o</tspan><tspan fill="#fbbc05">o</tspan><tspan fill="#4285f4">g</tspan><tspan fill="#34a853">l</tspan><tspan fill="#ea4335">e</tspan></text>
      </svg>

      <div class="ctl types"><b>Map</b><span>Satellite</span></div>
      <div class="ctl full">
        <svg viewBox="0 0 18 18"><path d="M1.200 6V1.200H6M12 1.200H16.800V6M16.800 12V16.800H12M6 16.800H1.200V12" fill="none" stroke="#666" stroke-width="2.400" /></svg>
      </div>
      <div class="ctl peg">
        <svg viewBox="0 0 14 24"><path d="M3.500 8.500H10.500L13.500 10V17H11L10 23.500H4L3 17H.500V10Z" fill="#efb23c" /><path d="M7 12V23.500M3 10V17M11 10V17" stroke="#cf8f27" stroke-width=".8" /><path d="M4 8.500H10L7 12Z" fill="#d9822b" /><circle cx="7" cy="4.500" r="4.300" fill="#efb23c" stroke="#d9982c" stroke-width=".5" /></svg>
      </div>
      <div class="ctl zoom">
        <svg viewBox="0 0 34 66"><path d="M11 16H23M17 10V22M11 50H23" stroke="#666" stroke-width="3.200" /><path d="M6 33H28" stroke="#e6e6e6" /></svg>
      </div>
      <div class="credits"><span>Map data ©2018 Google</span><span>Terms of Use</span><span>Report a map error</span></div>
      <a class="to-top">
        <svg viewBox="0 0 26 32"><path d="M13 30V2.500M2 13L13 2 24 13" /></svg>
      </a>
    </section>

    <footer class="foot">
      <p>© Mule Truck 2017. All Rights Reserved.</p>
      <p>Designed by <a>Tarek Salama</a></p>
    </footer>
  </div>
</template>

<style>
body { background: #fff; overflow: hidden; }
</style>

<style scoped>
.page {
  height: 1099px;
  display: flex;
  flex-direction: column;
  background: #fff;
  color: #666;
  font-family: "Noto Sans CJK SC", "Open Sans", sans-serif;
  font-weight: 300;
  overflow: hidden;
}
a { color: #1f7fe5; }
.topbar { height: 60px; flex: none; border-bottom: 1px solid #f1f1f1; box-shadow: 0 1px 4px rgba(0, 0, 0, .05); }
.wrap { width: 1376px; margin: 0 auto; padding-left: 2px; display: flex; justify-content: space-between; align-items: flex-start; }
.logo { width: 72px; height: 72px; margin-top: 13.500px; flex: none; position: relative; }
.nav { display: flex; gap: 36px; margin-top: 11px; }
.nav a { font-size: 20.600px; line-height: 28px; color: #777; border-bottom: 2px solid transparent; white-space: nowrap; }
.nav a.active { color: #2182e8; border-color: #2182e8; }
.contact { flex: none; width: 1374px; height: 267px; margin: 0 auto; padding: 25px 0 0 1px; box-sizing: border-box; }
.row { display: flex; align-items: center; height: 36px; margin-bottom: 36px; font-size: 21.600px; line-height: 36px; }
.icon { width: 24px; margin-right: 36px; fill: none; stroke: #777; stroke-width: 1.3; flex: none; }
.mail { height: 17px; margin-top: -2px; }
.globe { height: 24px; }
.map { position: relative; flex: none; height: 604px; font-family: Roboto, sans-serif; font-weight: 400; }
.canvas { display: block; width: 1920px; height: 604px; overflow: hidden; }

.farm { fill: #ebe9e4; }
.reserve { fill: #eeecea; }
.pale { fill: #e0ecdd; }
.park { fill: #cdeaba; }
.golf { fill: none; stroke: #cdeaba; stroke-width: 7; }
.relief { opacity: .6; }
.water { fill: #b3d9fd; }
.brook { fill: none; stroke: #c2ddf8; stroke-width: 3.5; }
.rail { fill: none; stroke: #d8d8da; stroke-width: 3; }
.streets { fill: none; stroke: #fff; stroke-width: 5; stroke-linejoin: round; }
.casing { fill: none; stroke: #f2cf7c; stroke-width: 14; stroke-linejoin: round; stroke-linecap: round; }
.highways { fill: none; stroke: #fde7a2; stroke-width: 8; stroke-linejoin: round; stroke-linecap: round; }

.label { text-anchor: middle; paint-order: stroke; stroke: rgba(255, 255, 255, .85); stroke-width: 2.6px; stroke-linejoin: round; }
.town { font-size: 14.500px; fill: #5b6067; }
.dark { font-size: 15.500px; fill: #3c4047; }
.city { font-size: 19px; fill: #30343a; }
.metro { font-size: 22.500px; fill: #202428; }
.hood { font-size: 11.800px; font-weight: 500; fill: #8895b3; }
.tribe { font-size: 14px; fill: #a9a996; }
.green { font-size: 15.500px; fill: #2b7d29; }
.slant { font-style: italic; }
.airport { font-size: 15.500px; fill: #2c8cc4; }
.road { font-size: 12.500px; fill: #704214; }
.river { font-size: 12.500px; fill: #4e7cc0; stroke-width: 1.200px; stroke: rgba(255, 255, 255, .4); }
.along { text-anchor: start; }
.num { font-size: 11px; fill: #444; text-anchor: middle; }
.inter { font-weight: 700; fill: #fff; }
.google { font: 500 25px Inter, sans-serif; paint-order: stroke; stroke: rgba(255, 255, 255, .8); stroke-width: 2.500px; }

.ctl { position: absolute; background: #fff; border-radius: 2px; box-shadow: 0 1px 4px rgba(0, 0, 0, .2); display: flex; align-items: center; }
.ctl svg { display: block; margin: auto; }
.types { left: 8px; top: 12px; width: 113px; height: 34px; font-size: 12.900px; color: #444; }
.types b { width: 44px; text-align: center; font-weight: 500; color: #000; border-right: 1px solid #eee; line-height: 34px; }
.types span { flex: 1; text-align: center; }
.full { left: 1880px; top: 12px; width: 29px; height: 30px; border-radius: 0; box-shadow: none; }
.full svg { width: 18px; height: 18px; }
.peg { left: 1881px; top: 461px; width: 34px; height: 35px; }
.peg svg { width: 14px; height: 24px; }
.zoom { left: 1881px; top: 508px; width: 34px; height: 66px; }
.zoom svg { width: 34px; height: 66px; }
.credits { position: absolute; right: 0; bottom: 0; width: 333px; height: 18px; padding-left: 6px; display: flex; justify-content: space-between; background: rgba(245, 245, 245, .75); color: #333; font-size: 12px; line-height: 17px; white-space: nowrap; }
.to-top { position: absolute; left: 914px; top: 579px; width: 94px; height: 94px; border-radius: 50%; background: #fff; }
.to-top svg { display: block; width: 26px; height: 32px; margin: 15px 0 0 34px; fill: none; stroke: #4a90e2; stroke-width: 3; stroke-linecap: round; stroke-linejoin: round; }

.foot { flex: 1; padding-top: 95px; text-align: center; font-size: 21.650px; line-height: 36px; }
.foot p { margin: 0 2px 0 0; }
.foot a { color: #2a7de1; }
</style>
